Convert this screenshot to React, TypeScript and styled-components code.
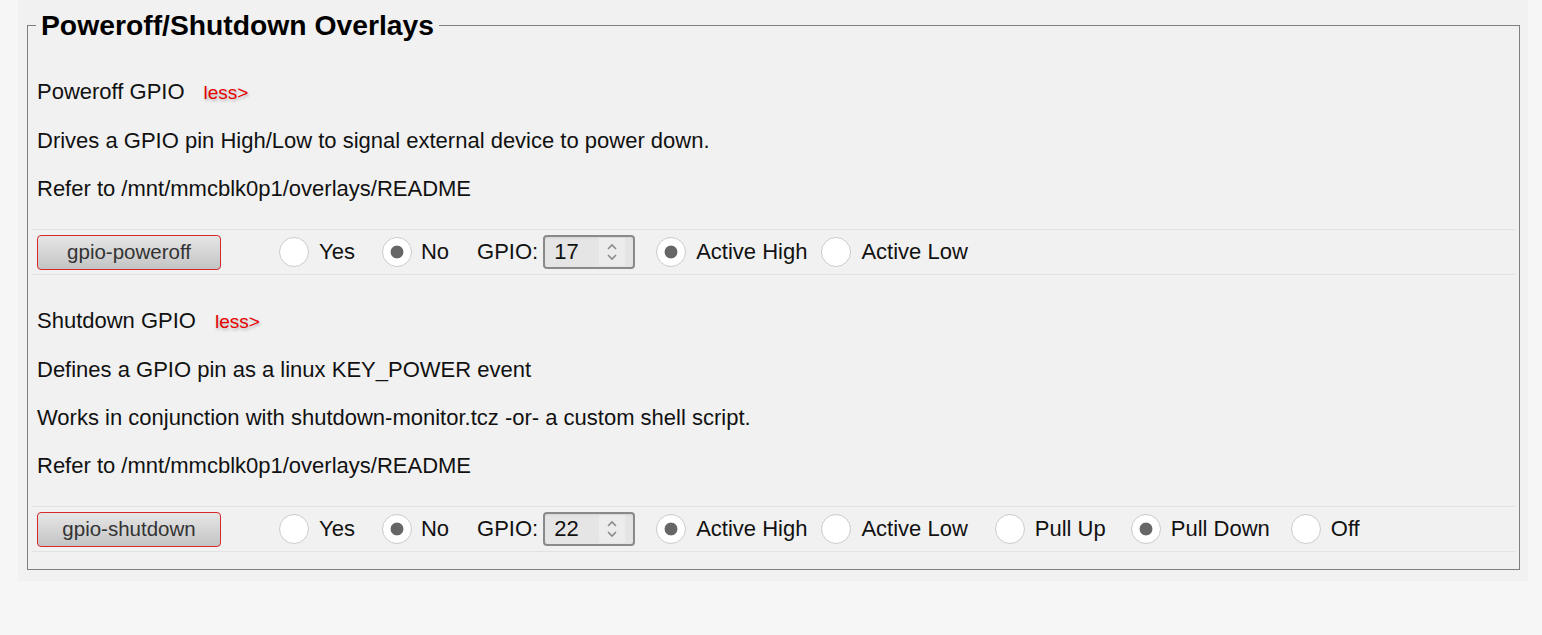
import React from "react";
import styled, { createGlobalStyle } from "styled-components";

const Global = createGlobalStyle`
  html, body { margin: 0; padding: 0; background: #f6f6f6; }
  body { font-family: "Liberation Sans", Arial, sans-serif; color: #111; }
`;

const Page = styled.div`
  margin-left: 18px;
  width: 1510px;
  background: #f1f1f1;
  padding: 9px 8px 11px 9px;
  box-sizing: border-box;
`;

const Fieldset = styled.fieldset`
  margin: 0;
  padding: 0 4px 17px 4px;
  border: 1px solid #7f7f7f;
  min-width: 0;
`;

const Legend = styled.legend`
  font-size: 28.3px;
  font-weight: bold;
  line-height: 32px;
  padding: 0 5px;
  margin-left: 4px;
  color: #000;
`;

const Section = styled.div<{ $top: number }>`
  display: flex;
  flex-direction: column;
  padding-top: ${(p) => p.$top}px;
`;

const Para = styled.p`
  margin: 0 0 20px 0;
  padding-left: 5px;
  font-size: 22px;
  line-height: 28px;
  &:last-of-type { margin-bottom: 26px; }
`;

const Less = styled.span`
  color: #e60000;
  font-size: 19px;
  margin-left: 19px;
  text-shadow: 1px 2px 3px rgba(0, 0, 0, 0.25);
`;

const Row = styled.div`
  display: flex;
  align-items: center;
  height: 44px;
  border-top: 1px solid #e2e2e2;
  border-bottom: 1px solid #e2e2e2;
  padding-left: 5px;
  font-size: 22px;
`;

const OverlayButton = styled.button`
  width: 184px;
  height: 35px;
  box-sizing: border-box;
  border: 1px solid #d42a2a;
  border-radius: 4px;
  background: linear-gradient(#e6e6e6, #c4c4c4);
  font-family: "Liberation Sans", Arial, sans-serif;
  font-size: 20.5px;
  color: #333;
  padding: 0;
`;

const Radio = styled.input.attrs({ type: "radio" })<{ $ml: number }>`
  appearance: none;
  -webkit-appearance: none;
  margin: 0 0 0 ${(p) => p.$ml}px;
  width: 30px;
  height: 30px;
  border-radius: 50%;
  border: 1px solid #cbcbcb;
  background: #fff;
  box-sizing: border-box;
  flex: none;
  &:checked {
    background: radial-gradient(circle, #666 0, #666 6px, #fff 6.8px);
  }
`;

const Label = styled.span<{ $ml?: number }>`
  margin-left: ${(p) => p.$ml ?? 10}px;
  line-height: 26px;
`;

const NumberBox = styled.div`
  margin-left: 5px;
  width: 92px;
  height: 34px;
  box-sizing: border-box;
  border: 2px solid #8a8a8a;
  border-radius: 4px;
  background: #e5e5e5;
  box-shadow: inset 0 1px 2px rgba(0, 0, 0, 0.08);
  display: flex;
  align-items: center;
  padding: 0 8px 0 9px;
`;

const NumberValue = styled.span`
  font-size: 22px;
  flex: 1;
`;

const Spin = styled.span`
  width: 26px;
  height: 28px;
  background: #ececec;
  display: flex;
  align-items: center;
  justify-content: center;
`;

const Spinner = () => (
  <Spin>
    <svg width="12" height="22" viewBox="0 0 12 22">
      <path d="M2 8 L6 4 L10 8" fill="none" stroke="#8a8a8a" strokeWidth="1.6" />
      <path d="M2 14 L6 18 L10 14" fill="none" stroke="#8a8a8a" strokeWidth="1.6" />
    </svg>
  </Spin>
);

type Opt = { label: string; ml: number; checked?: boolean };

const OptionRow = ({ name, btn, gpio, opts }: { name: string; btn: string; gpio: string; opts: Opt[] }) => (
  <Row>
    <OverlayButton>{btn}</OverlayButton>
    <Radio name={name + "-en"} $ml={58} readOnly />
    <Label>Yes</Label>
    <Radio name={name + "-en"} $ml={27} defaultChecked />
    <Label $ml={9}>No</Label>
    <Label $ml={28}>GPIO:</Label>
    <NumberBox>
      <NumberValue>{gpio}</NumberValue>
      <Spinner />
    </NumberBox>
    {opts.map((o, i) => (
      <React.Fragment key={o.label}>
        <Radio name={name + "-opt" + (i < 2 ? "a" : "b")} $ml={o.ml} defaultChecked={o.checked} />
        <Label>{o.label}</Label>
      </React.Fragment>
    ))}
  </Row>
);

export default function App() {
  return (
    <>
      <Global />
      <Page>
        <Fieldset>
          <Legend>Poweroff/Shutdown Overlays</Legend>
          <Section $top={37}>
            <Para>
              Poweroff GPIO<Less>less&gt;</Less>
            </Para>
            <Para>Drives a GPIO pin High/Low to signal external device to power down.</Para>
            <Para>Refer to /mnt/mmcblk0p1/overlays/README</Para>
            <OptionRow
              name="poweroff"
              btn="gpio-poweroff"
              gpio="17"
              opts={[
                { label: "Active High", ml: 21, checked: true },
                { label: "Active Low", ml: 14 },
              ]}
            />
          </Section>
          <Section $top={32}>
            <Para>
              Shutdown GPIO<Less>less&gt;</Less>
            </Para>
            <Para>Defines a GPIO pin as a linux KEY_POWER event</Para>
            <Para>Works in conjunction with shutdown-monitor.tcz -or- a custom shell script.</Para>
            <Para>Refer to /mnt/mmcblk0p1/overlays/README</Para>
            <OptionRow
              name="shutdown"
              btn="gpio-shutdown"
              gpio="22"
              opts={[
                { label: "Active High", ml: 21, checked: true },
                { label: "Active Low", ml: 14 },
                { label: "Pull Up", ml: 27 },
                { label: "Pull Down", ml: 25, checked: true },
                { label: "Off", ml: 21 },
              ]}
            />
          </Section>
        </Fieldset>
      </Page>
    </>
  );
}
